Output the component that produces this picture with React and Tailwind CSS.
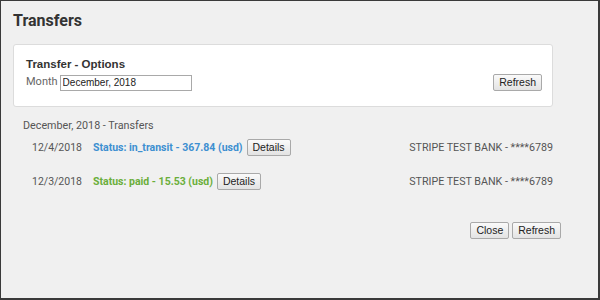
import React from "react";

const btn =
  "h-[17px] px-[5px] text-[10.5px] leading-none text-[#222] bg-gradient-to-b from-[#fafafa] to-[#e3e3e3] border border-[#a9a9a9] rounded-[2px] font-['Liberation_Sans',Arial,sans-serif]";

const rows = [
  {
    date: "12/4/2018",
    status: "Status: in_transit - 367.84 (usd)",
    color: "text-[#3d8fd1]",
    bank: "STRIPE TEST BANK - ****6789",
  },
  {
    date: "12/3/2018",
    status: "Status: paid - 15.53 (usd)",
    color: "text-[#6aae3a]",
    bank: "STRIPE TEST BANK - ****6789",
  },
];

export default function App() {
  return (
    <div className="w-[600px] h-[300px] bg-[#f0f0f0] border-l border-t border-r-2 border-b-2 border-[#3a3a3a] font-['Roboto',Arial,sans-serif] text-[#555] overflow-hidden">
      <div className="pl-[12px] pr-[45px]">
        <h1 className="pt-[10px] text-[16px] leading-[20px] font-bold text-[#333]">Transfers</h1>

        <div className="mt-[13px] h-[63px] bg-white border border-[#dcdcdc] rounded-[3px] pl-[12px] pr-[10px] pt-[12px]">
          <div className="text-[11.5px] leading-[15px] font-bold text-[#333] font-['Liberation_Sans',Arial,sans-serif]">
            Transfer - Options
          </div>
          <div className="mt-[2px] flex items-center justify-between">
            <div className="flex items-center text-[11px] text-[#666]">
              <span className="mr-[2px]">Month</span>
              <input
                readOnly
                value="December, 2018"
                className="w-[132px] h-[16px] px-[2px] text-[10px] text-[#222] border border-[#a9a9a9] bg-white outline-none font-['Liberation_Sans',Arial,sans-serif]"
              />
            </div>
            <button className={btn}>Refresh</button>
          </div>
        </div>

        <div className="mt-[12px] pl-[10px] text-[10.75px] leading-[14px] text-[#555]">
          December, 2018 - Transfers
        </div>

        {rows.map((r, i) => (
          <div key={i} className={`${i === 0 ? "mt-[6px]" : "mt-[17px]"} pl-[19px] flex items-center text-[10.5px] leading-[17px]`}>
            <span className="w-[61px]">{r.date}</span>
            <span className={`font-bold ${r.color}`}>{r.status}</span>
            <button className={`${btn} ml-[4px]`}>Details</button>
            <span className="ml-auto text-[10.7px] text-[#555]">{r.bank}</span>
          </div>
        ))}

        <div className="mt-[32px] flex justify-end gap-[3px] -mr-[8px]">
          <button className={btn}>Close</button>
          <button className={btn}>Refresh</button>
        </div>
      </div>
    </div>
  );
}
